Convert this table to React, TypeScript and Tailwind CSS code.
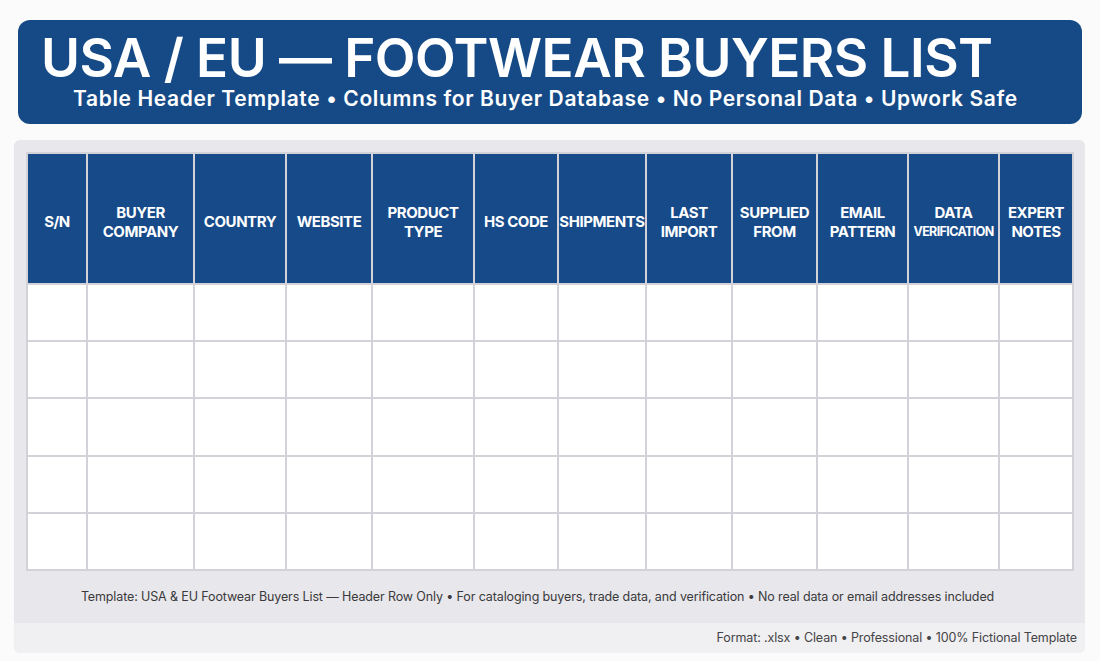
import React from 'react'

const columns: string[][] = [
  ['S/N'],
  ['BUYER', 'COMPANY'],
  ['COUNTRY'],
  ['WEBSITE'],
  ['PRODUCT', 'TYPE'],
  ['HS CODE'],
  ['SHIPMENTS'],
  ['LAST', 'IMPORT'],
  ['SUPPLIED', 'FROM'],
  ['EMAIL', 'PATTERN'],
  ['DATA', 'VERIFICATION'],
  ['EXPERT', 'NOTES'],
]

const rowHeights = ['h-[57px]', 'h-[57px]', 'h-[58px]', 'h-[57px]', 'h-[57px]']

const font = { fontFamily: 'Inter, "Noto Sans", sans-serif' }

function HeaderCell({ lines, index }: { lines: string[]; index: number }) {
  return (
    <div className="flex flex-col items-center justify-center pt-[6px] bg-[#174a88] border-l-2 border-[#d3d2d8] text-white font-bold text-[15px] leading-[19px] tracking-[-0.03em] text-center">
      {lines.map((line, i) => (
        <span
          key={line}
          className={index === 10 && i === 1 ? 'text-[12.5px] tracking-[-0.05em]' : ''}
        >
          {line}
        </span>
      ))}
    </div>
  )
}

export default function App() {
  return (
    <div className="w-[1100px] h-[661px] bg-[#fbfbfc] px-[14px] pt-[20px] overflow-hidden" style={font}>
      {/* Banner */}
      <div className="mx-[4px] h-[104px] rounded-[12px] bg-[#154a87] flex flex-col text-white">
        <h1 className="pl-[23px] pt-[13px] text-[53px] leading-[50px] font-semibold tracking-[-0.01em]">
          USA / EU — FOOTWEAR BUYERS LIST
        </h1>
        <p className="pl-[55px] mt-[4px] text-[21px] leading-[23px] font-semibold tracking-[0.03em]">
          Table Header Template • Columns for Buyer Database • No Personal Data • Upwork Safe
        </p>
      </div>

      {/* Panel */}
      <div className="mt-[16px] w-[1071px] rounded-[6px] bg-[#e8e7eb] overflow-hidden">
        <div className="pt-[12px] px-[12px]">
          <div className="w-[1048px] border-r-2 border-b-2 border-[#d3d2d8] bg-white">
            <div className="grid grid-cols-[60px_107px_92px_86px_102px_84px_88px_86px_85px_91px_91px_74px] h-[131px] border-t-2 border-[#d3d2d8]">
              {columns.map((c, i) => (
                <HeaderCell key={i} lines={c} index={i} />
              ))}
            </div>
            {rowHeights.map((h, r) => (
              <div
                key={r}
                className={`grid grid-cols-[60px_107px_92px_86px_102px_84px_88px_86px_85px_91px_91px_74px] ${h}`}
              >
                {columns.map((_, i) => (
                  <div key={i} className="border-l-2 border-t-2 border-[#d3d2d8] bg-white" />
                ))}
              </div>
            ))}
          </div>
        </div>
        <div className="h-[52px] flex items-center justify-center pr-[24px] text-[12.5px] text-[#3a3a3c] tracking-[-0.01em]">
          Template: USA &amp; EU Footwear Buyers List — Header Row Only • For cataloging buyers, trade data, and verification • No real data or email addresses included
        </div>
        <div className="h-[30px] bg-[#f0eff2] flex items-center justify-end pr-[8px] text-[12.5px] text-[#444446] tracking-[-0.01em]">
          Format: .xlsx • Clean • Professional • 100% Fictional Template
        </div>
      </div>
    </div>
  )
}
